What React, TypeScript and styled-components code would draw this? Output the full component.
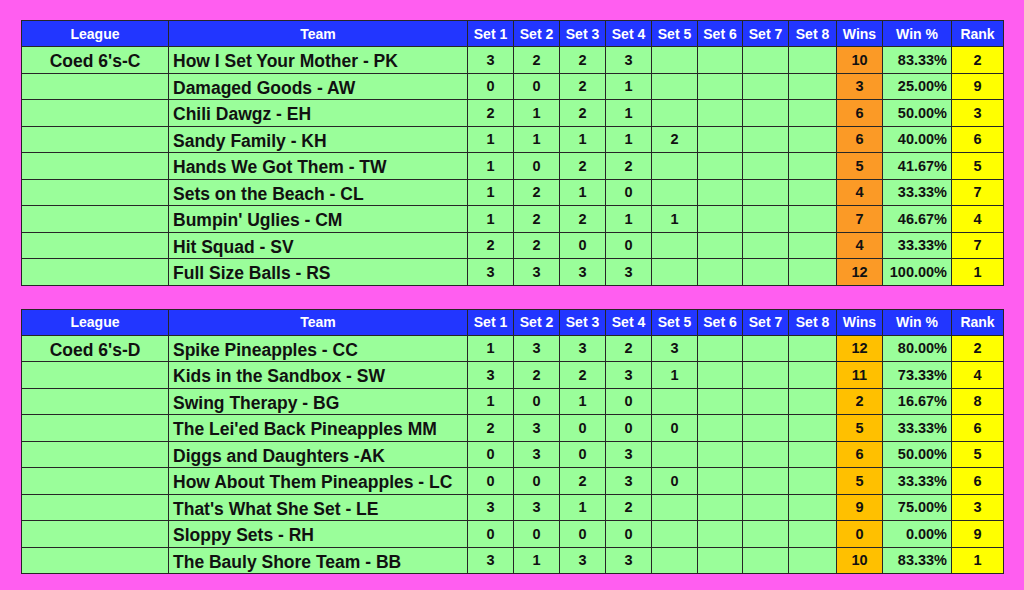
import styled, {createGlobalStyle} from "styled-components";

const GlobalStyle = createGlobalStyle`
  html, body {
    margin: 0;
    padding: 0;
    background: #ff5ef0;
  }
  body {
    font-family: "Liberation Sans", Arial, sans-serif;
  }
`

interface TeamRow {
    team: string;
    sets: Array<number | null>;
    wins: number;
    pct: string;
    rank: number;
}

interface LeagueData {
    name: string;
    winsColor: string;
    rows: Array<TeamRow>;
}

const leagues: Array<LeagueData> = [
    {
        name: "Coed 6's-C",
        winsColor: "#fb9a26",
        rows: [
            {team: "How I Set Your Mother - PK", sets: [3, 2, 2, 3], wins: 10, pct: "83.33%", rank: 2},
            {team: "Damaged Goods - AW", sets: [0, 0, 2, 1], wins: 3, pct: "25.00%", rank: 9},
            {team: "Chili Dawgz - EH", sets: [2, 1, 2, 1], wins: 6, pct: "50.00%", rank: 3},
            {team: "Sandy Family - KH", sets: [1, 1, 1, 1, 2], wins: 6, pct: "40.00%", rank: 6},
            {team: "Hands We Got Them - TW", sets: [1, 0, 2, 2], wins: 5, pct: "41.67%", rank: 5},
            {team: "Sets on the Beach - CL", sets: [1, 2, 1, 0], wins: 4, pct: "33.33%", rank: 7},
            {team: "Bumpin' Uglies - CM", sets: [1, 2, 2, 1, 1], wins: 7, pct: "46.67%", rank: 4},
            {team: "Hit Squad - SV", sets: [2, 2, 0, 0], wins: 4, pct: "33.33%", rank: 7},
            {team: "Full Size Balls - RS", sets: [3, 3, 3, 3], wins: 12, pct: "100.00%", rank: 1},
        ],
    },
    {
        name: "Coed 6's-D",
        winsColor: "#ffc000",
        rows: [
            {team: "Spike Pineapples - CC", sets: [1, 3, 3, 2, 3], wins: 12, pct: "80.00%", rank: 2},
            {team: "Kids in the Sandbox - SW", sets: [3, 2, 2, 3, 1], wins: 11, pct: "73.33%", rank: 4},
            {team: "Swing Therapy - BG", sets: [1, 0, 1, 0], wins: 2, pct: "16.67%", rank: 8},
            {team: "The Lei'ed Back Pineapples MM", sets: [2, 3, 0, 0, 0], wins: 5, pct: "33.33%", rank: 6},
            {team: "Diggs and Daughters -AK", sets: [0, 3, 0, 3], wins: 6, pct: "50.00%", rank: 5},
            {team: "How About Them Pineapples - LC", sets: [0, 0, 2, 3, 0], wins: 5, pct: "33.33%", rank: 6},
            {team: "That's What She Set - LE", sets: [3, 3, 1, 2], wins: 9, pct: "75.00%", rank: 3},
            {team: "Sloppy Sets - RH", sets: [0, 0, 0, 0], wins: 0, pct: "0.00%", rank: 9},
            {team: "The Bauly Shore Team - BB", sets: [3, 1, 3, 3], wins: 10, pct: "83.33%", rank: 1},
        ],
    },
]

const headers = ["League", "Team", "Set 1", "Set 2", "Set 3", "Set 4", "Set 5", "Set 6", "Set 7", "Set 8", "Wins", "Win %", "Rank"]

const Page = styled.div`
  display: flex;
  flex-direction: column;
  gap: 23px;
  padding: 20px 0 0 21px;
`
const Sheet = styled.div`
  display: grid;
  width: 981px;
  grid-template-columns: 146px 298px 45px 45px 45px 45px 45px 44px 45px 47px 45px 68px 51px;
  grid-template-rows: 25px repeat(9, 25.5px);
  gap: 1px;
  background: #262626;
  border: 1px solid #262626;
`
const HeadCell = styled.div`
  display: flex;
  align-items: center;
  justify-content: center;
  background: #2236ff;
  color: #ffffff;
  font-size: 14px;
  font-weight: bold;
`
const Cell = styled.div<{ $bg?: string; $align?: string; $big?: boolean }>`
  display: flex;
  align-items: center;
  justify-content: ${p => p.$align || "center"};
  padding: ${p => p.$big ? "4px 4px 0 4px" : "0 4px"};
  background: ${p => p.$bg || "#9afe9a"};
  color: #111111;
  font-size: ${p => p.$big ? "17.5px" : "14.5px"};
  font-weight: bold;
  white-space: nowrap;
  overflow: hidden;
`

function LeagueSheet({league}: { league: LeagueData }) {
    return (
        <Sheet>
            {headers.map(h => <HeadCell key={h}>{h}</HeadCell>)}
            {league.rows.map((r, i) => (
                <>
                    <Cell key={"l" + i} $big>{i === 0 ? league.name : ""}</Cell>
                    <Cell key={"t" + i} $big $align="flex-start">{r.team}</Cell>
                    {Array.from({length: 8}).map((_, s) => (
                        <Cell key={"s" + i + "-" + s}>{r.sets[s] ?? ""}</Cell>
                    ))}
                    <Cell key={"w" + i} $bg={league.winsColor}>{r.wins}</Cell>
                    <Cell key={"p" + i} $align="flex-end">{r.pct}</Cell>
                    <Cell key={"r" + i} $bg="#ffff00">{r.rank}</Cell>
                </>
            ))}
        </Sheet>
    );
}

export default function App() {
    return (
        <>
            <GlobalStyle/>
            <Page>
                {leagues.map(l => <LeagueSheet key={l.name} league={l}/>)}
            </Page>
        </>
    );
}
